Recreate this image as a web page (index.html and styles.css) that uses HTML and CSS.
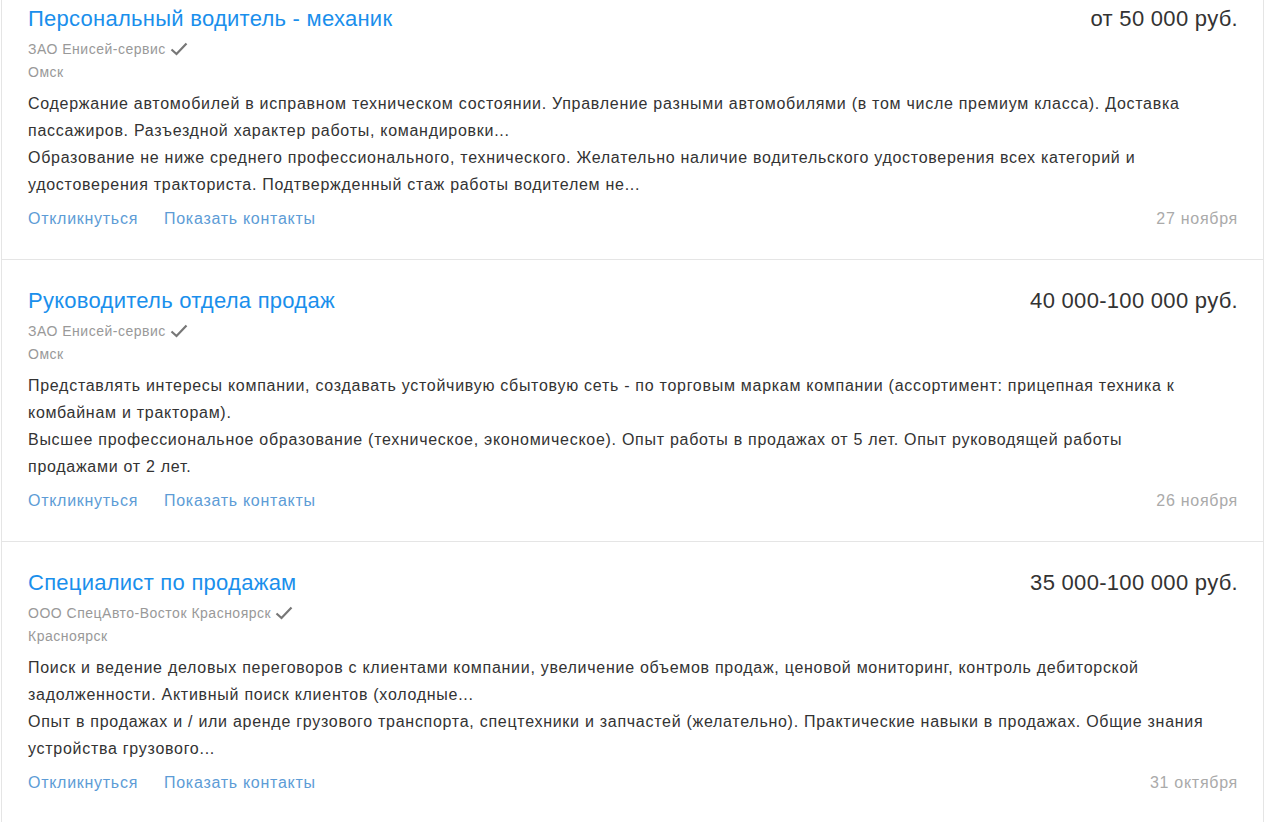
FILE: index.html
```html
<!DOCTYPE html>
<html lang="ru">
<head>
  <meta charset="UTF-8">
  <meta name="viewport" content="width=device-width, initial-scale=1.0">
  <title>Вакансии</title>
  <link rel="stylesheet" href="styles.css">
</head>
<body>
  <div class="vacancy-list">

    <!-- Вакансия 1 -->
    <div class="vacancy">
      <div class="vacancy-head">
        <a class="vacancy-title" href="#">Персональный водитель - механик</a>
        <div class="vacancy-salary">от 50 000 руб.</div>
      </div>
      <div class="vacancy-company">ЗАО Енисей-сервис
        <svg class="check" viewBox="0 0 18 14" width="18" height="14"><path d="M1.5 7.5 L6.5 12 L16.5 1.5" fill="none" stroke="currentColor" stroke-width="2.2"/></svg>
      </div>
      <div class="vacancy-city">Омск</div>
      <div class="vacancy-text">
        <p>Содержание автомобилей в исправном техническом состоянии. Управление разными автомобилями (в том числе премиум класса). Доставка пассажиров. Разъездной характер работы, командировки...</p>
        <p>Образование не ниже среднего профессионального, технического. Желательно наличие водительского удостоверения всех категорий и удостоверения тракториста. Подтвержденный стаж работы водителем не...</p>
      </div>
      <div class="vacancy-foot">
        <div class="vacancy-actions">
          <a href="#">Откликнуться</a>
          <a href="#">Показать контакты</a>
        </div>
        <div class="vacancy-date">27 ноября</div>
      </div>
    </div>

    <!-- Вакансия 2 -->
    <div class="vacancy">
      <div class="vacancy-head">
        <a class="vacancy-title" href="#">Руководитель отдела продаж</a>
        <div class="vacancy-salary">40 000-100 000 руб.</div>
      </div>
      <div class="vacancy-company">ЗАО Енисей-сервис
        <svg class="check" viewBox="0 0 18 14" width="18" height="14"><path d="M1.5 7.5 L6.5 12 L16.5 1.5" fill="none" stroke="currentColor" stroke-width="2.2"/></svg>
      </div>
      <div class="vacancy-city">Омск</div>
      <div class="vacancy-text">
        <p>Представлять интересы компании, создавать устойчивую сбытовую сеть - по торговым маркам компании (ассортимент: прицепная техника к комбайнам и тракторам).</p>
        <p>Высшее профессиональное образование (техническое, экономическое). Опыт работы в продажах от 5 лет. Опыт руководящей работы продажами от 2 лет.</p>
      </div>
      <div class="vacancy-foot">
        <div class="vacancy-actions">
          <a href="#">Откликнуться</a>
          <a href="#">Показать контакты</a>
        </div>
        <div class="vacancy-date">26 ноября</div>
      </div>
    </div>

    <!-- Вакансия 3 -->
    <div class="vacancy">
      <div class="vacancy-head">
        <a class="vacancy-title" href="#">Специалист по продажам</a>
        <div class="vacancy-salary">35 000-100 000 руб.</div>
      </div>
      <div class="vacancy-company">ООО СпецАвто-Восток Красноярск
        <svg class="check" viewBox="0 0 18 14" width="18" height="14"><path d="M1.5 7.5 L6.5 12 L16.5 1.5" fill="none" stroke="currentColor" stroke-width="2.2"/></svg>
      </div>
      <div class="vacancy-city">Красноярск</div>
      <div class="vacancy-text">
        <p>Поиск и ведение деловых переговоров с клиентами компании, увеличение объемов продаж, ценовой мониторинг, контроль дебиторской задолженности. Активный поиск клиентов (холодные...</p>
        <p>Опыт в продажах и / или аренде грузового транспорта, спецтехники и запчастей (желательно). Практические навыки в продажах. Общие знания устройства грузового...</p>
      </div>
      <div class="vacancy-foot">
        <div class="vacancy-actions">
          <a href="#">Откликнуться</a>
          <a href="#">Показать контакты</a>
        </div>
        <div class="vacancy-date">31 октября</div>
      </div>
    </div>

  </div>
</body>
</html>
```

FILE: styles.css
```css
/* Общие стили */
body {
  margin: 0;
  padding-left: 1px;
  font-family: 'Liberation Sans', Arial, sans-serif;
  background: #fff;
  color: #333;
}

/* Список вакансий (страница прокручена) */
.vacancy-list {
  width: 1261px;
  margin-top: -23px;
  border-left: 1px solid #e5e5e5;
  border-right: 1px solid #e5e5e5;
  background: #fff;
}

/* Карточка */
.vacancy {
  border-top: 1px solid #e5e5e5;
  padding: 26px 25px 29px 26px;
}

.vacancy-head {
  display: flex;
  justify-content: space-between;
  align-items: baseline;
}

.vacancy-title {
  font-size: 22px;
  line-height: 30px;
  letter-spacing: 0.26px;
  color: #1a8fec;
  text-decoration: none;
}

.vacancy-salary {
  font-size: 22px;
  line-height: 30px;
  letter-spacing: 0.3px;
  color: #333;
}

.vacancy-company {
  margin-top: 3px;
  font-size: 14px;
  line-height: 24px;
  letter-spacing: 0.5px;
  color: #999;
  display: flex;
  align-items: center;
  gap: 4px;
}

.vacancy-company .check {
  color: #777;
}

.vacancy-city {
  font-size: 14px;
  line-height: 22px;
  letter-spacing: 0.5px;
  color: #999;
}

/* Описание */
.vacancy-text {
  max-width: 1184px;
  margin-top: 7px;
  font-size: 16px;
  line-height: 27px;
  letter-spacing: 0.72px;
  color: #333;
}

.vacancy-text p {
  margin: 0;
}

/* Низ карточки */
.vacancy-foot {
  margin-top: 10px;
  display: flex;
  justify-content: space-between;
  font-size: 16px;
  line-height: 22px;
  letter-spacing: 0.72px;
}

.vacancy-actions {
  display: flex;
  gap: 26px;
}

.vacancy-actions a {
  color: #5d9cd6;
  text-decoration: none;
}

.vacancy-date {
  color: #aaa;
}
```
